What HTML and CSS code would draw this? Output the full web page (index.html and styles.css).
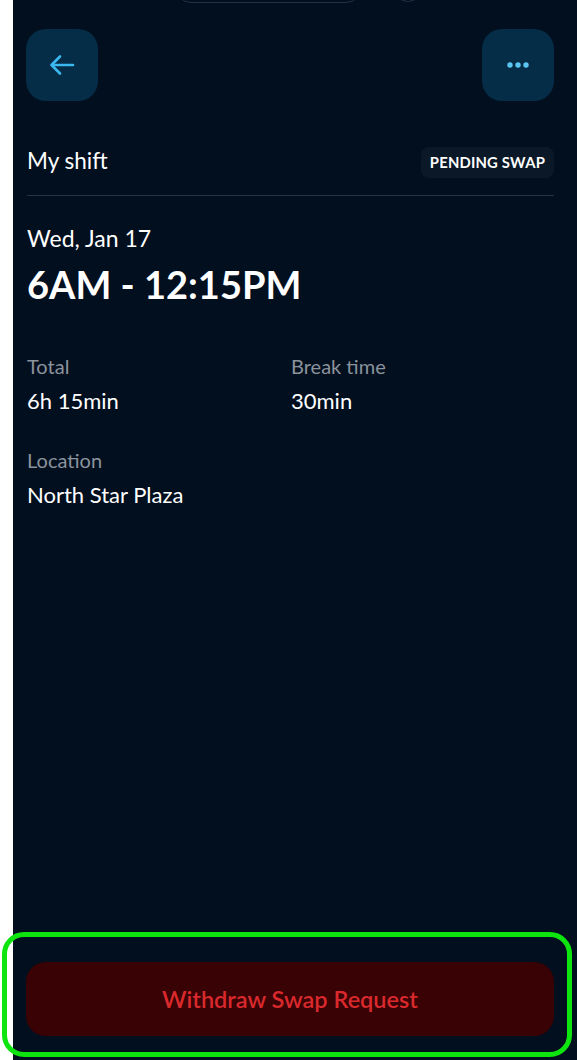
FILE: index.html
```html
<!DOCTYPE html>
<html lang="en">
<head>
  <meta charset="UTF-8" />
  <title>My shift</title>
  <link rel="stylesheet" href="styles.css">
</head>
<body>

  <div class="screen">
    <div class="island"></div>
    <div class="island-dot"></div>

    <div class="topbar">
      <button class="icon-btn" aria-label="Back">
        <svg width="28" height="28" viewBox="0 0 28 28" fill="none" stroke="#3bb8f0" stroke-width="2.6" stroke-linecap="round" stroke-linejoin="round">
          <path d="M25 14H4" />
          <path d="M12 5.5L3.5 14L12 22.5" />
        </svg>
      </button>
      <button class="icon-btn" aria-label="More">
        <svg width="24" height="8" viewBox="0 0 24 8" fill="#5cc6f2">
          <circle cx="4" cy="4" r="2.7" />
          <circle cx="12" cy="4" r="2.7" />
          <circle cx="20" cy="4" r="2.7" />
        </svg>
      </button>
    </div>

    <div class="content">
      <div class="shift-head">
        <span class="shift-title">My shift</span>
        <span class="badge">PENDING SWAP</span>
      </div>

      <div class="date">Wed, Jan 17</div>
      <div class="hours">6AM - 12:15PM</div>

      <div class="details">
        <div class="detail">
          <div class="label">Total</div>
          <div class="value">6h 15min</div>
        </div>
        <div class="detail">
          <div class="label">Break time</div>
          <div class="value">30min</div>
        </div>
        <div class="detail">
          <div class="label">Location</div>
          <div class="value">North Star Plaza</div>
        </div>
      </div>
    </div>

    <button class="withdraw">Withdraw Swap Request</button>
  </div>

  <div class="highlight"></div>

</body>
</html>
```

FILE: styles.css
```css
body { margin: 0; background: #fff; font-family: "Lato", "Noto Sans", sans-serif; }
.screen { position: relative; margin-left: 13px; min-height: 1060px; background: #020f1f; display: flex; flex-direction: column; padding: 0 23px 0 13px; box-sizing: border-box; overflow: hidden; }

.island { position: absolute; top: -30px; left: 162px; width: 185px; height: 31px; border: 1.5px solid #223041; border-radius: 16px; }
.island-dot { position: absolute; top: -28px; left: 380px; width: 28px; height: 28px; border: 1.5px solid #223041; border-radius: 50%; }

.topbar { display: flex; justify-content: space-between; padding-top: 29px; }
.icon-btn { width: 72px; height: 72px; border: none; border-radius: 20px; background: #052d47; display: flex; align-items: center; justify-content: center; padding: 0; cursor: pointer; }

.content { padding-left: 1px; flex: 1; }
.shift-head { display: flex; justify-content: space-between; align-items: center; margin-top: 46px; padding-bottom: 17px; border-bottom: 1px solid #27333f; }
.shift-title { color: #fff; font-size: 22.5px; line-height: 27px; padding-bottom: 4px; }
.badge { background: #0a1828; color: #fff; font-size: 14.8px; font-weight: 700; letter-spacing: 0.2px; line-height: 31px; padding: 0 9px; border-radius: 8px; }

.date { color: #fff; font-size: 23px; line-height: 28px; margin-top: 28px; }
.hours { color: #fff; font-size: 38px; font-weight: 700; line-height: 45px; margin-top: 10px; }

.details { display: grid; grid-template-columns: 264px 1fr; row-gap: 34px; margin-top: 47px; }
.label { color: #8b939c; font-size: 20px; line-height: 25px; }
.value { color: #fff; font-size: 22px; line-height: 26px; margin-top: 9px; }

.withdraw { margin: 0 0 24px; height: 74px; border: none; border-radius: 20px; background: #390204; color: #d9292d; font-family: inherit; font-size: 23.5px; font-weight: 600; cursor: pointer; }

.highlight { position: absolute; left: 2px; top: 932px; width: 570px; height: 125px; box-sizing: border-box; border: 5px solid #0ee50e; border-radius: 22px; pointer-events: none; }
```
